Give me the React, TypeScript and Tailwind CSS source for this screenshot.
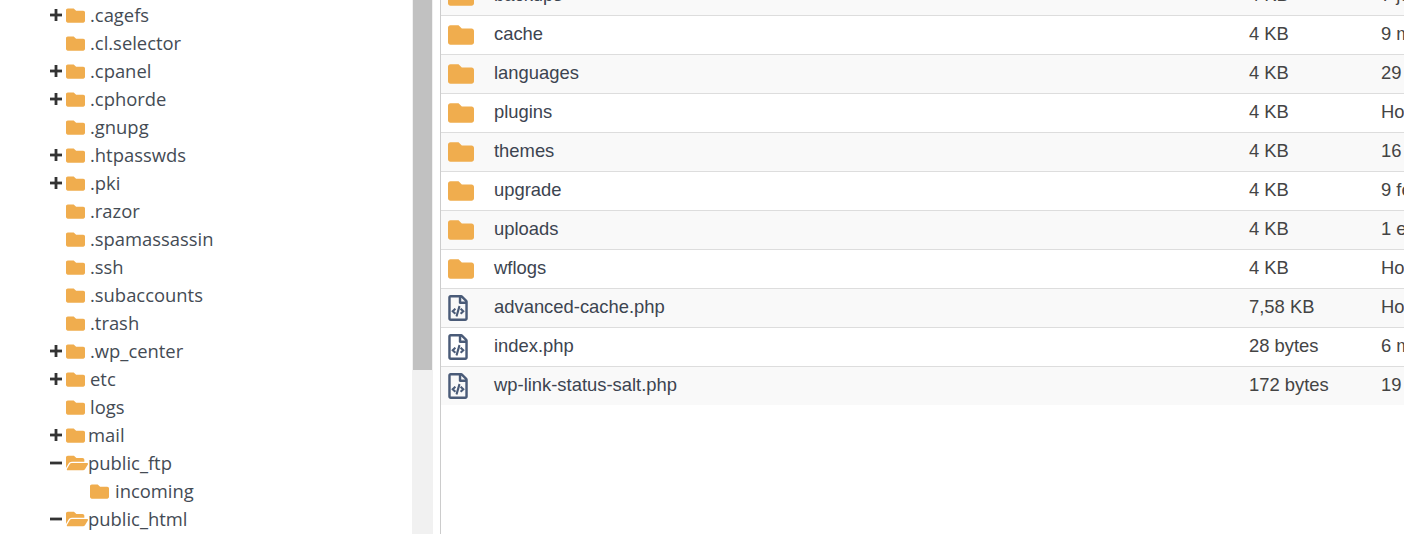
import { FaFolder, FaFolderOpen, FaRegFileCode } from "react-icons/fa";

type TreeRow = { name: string; toggle?: "plus" | "minus"; depth?: number; open?: boolean; tight?: boolean };

const tree: TreeRow[] = [
  { name: ".cagefs", toggle: "plus" },
  { name: ".cl.selector" },
  { name: ".cpanel", toggle: "plus" },
  { name: ".cphorde", toggle: "plus" },
  { name: ".gnupg" },
  { name: ".htpasswds", toggle: "plus" },
  { name: ".pki", toggle: "plus" },
  { name: ".razor" },
  { name: ".spamassassin" },
  { name: ".ssh" },
  { name: ".subaccounts" },
  { name: ".trash" },
  { name: ".wp_center", toggle: "plus" },
  { name: "etc", toggle: "plus" },
  { name: "logs" },
  { name: "mail", toggle: "plus", tight: true },
  { name: "public_ftp", toggle: "minus", open: true, tight: true },
  { name: "incoming", depth: 1 },
  { name: "public_html", toggle: "minus", open: true, tight: true },
];

type FileRow = { name: string; size: string; date: string; file?: boolean };

const files: FileRow[] = [
  { name: "backups", size: "4 KB", date: "7 jul" },
  { name: "cache", size: "4 KB", date: "9 may" },
  { name: "languages", size: "4 KB", date: "29 ene" },
  { name: "plugins", size: "4 KB", date: "Hoy" },
  { name: "themes", size: "4 KB", date: "16 ene" },
  { name: "upgrade", size: "4 KB", date: "9 feb" },
  { name: "uploads", size: "4 KB", date: "1 ene" },
  { name: "wflogs", size: "4 KB", date: "Hoy" },
  { name: "advanced-cache.php", size: "7,58 KB", date: "Hoy", file: true },
  { name: "index.php", size: "28 bytes", date: "6 may", file: true },
  { name: "wp-link-status-salt.php", size: "172 bytes", date: "19 ene", file: true },
];

function Toggle({ kind }: { kind?: "plus" | "minus" }) {
  return (
    <span className="flex w-[16px] shrink-0 items-center text-[#333]">
      {kind && (
        <svg width="12" height="12" viewBox="0 0 12 12" fill="none" stroke="currentColor" strokeWidth="2.8">
          <path d="M0 6H12" />
          {kind === "plus" && <path d="M6 0V12" />}
        </svg>
      )}
    </span>
  );
}

function Tree() {
  return (
    <div className="w-[412px] shrink-0 pt-px font-['Open_Sans',sans-serif] text-[18.4px] text-[#444b54]">
      {tree.map((r) => (
        <div key={r.name} className="flex h-[28px] items-center pl-[50px]">
          <Toggle kind={r.toggle} />
          {r.depth ? <span className="w-[24px] shrink-0" /> : null}
          {r.open ? (
            <FaFolderOpen className="h-[22px] w-[22px] shrink-0 text-[#f0ad4e]" />
          ) : (
            <FaFolder className="h-[19px] w-[19px] shrink-0 text-[#f0ad4e]" />
          )}
          <span className={r.open ? "" : r.tight ? "ml-[3px]" : r.depth ? "ml-[6px]" : "ml-[5px]"}>{r.name}</span>
        </div>
      ))}
    </div>
  );
}

function Scrollbar() {
  return (
    <div className="flex h-full w-[21px] shrink-0 justify-center bg-[#f1f1f1]">
      <div className="h-[370px] w-[19px] bg-[#c1c1c1]" />
    </div>
  );
}

function Table() {
  return (
    <div className="ml-[7px] min-w-0 flex-1 overflow-hidden border-l border-[#ccc] font-['Liberation_Sans',sans-serif] text-[18.4px] text-[#444]">
      <div className="-mt-[24px]">
        {files.map((f, i) => (
          <div
            key={f.name}
            className={`flex h-[39px] items-center border-t border-[#ddd] pb-[2px] ${i % 2 === 0 ? "bg-[#f9f9f9]" : "bg-white"}`}
          >
            <span className="mt-[2px] flex w-[53px] shrink-0 pl-[7px]">
              {f.file ? (
                <FaRegFileCode className="h-[26px] w-[20px] text-[#4a5b78]" />
              ) : (
                <FaFolder className="h-[26px] w-[26px] text-[#f0ad4e]" />
              )}
            </span>
            <span className="w-[755px] shrink-0 text-[#3c4450]">{f.name}</span>
            <span className="w-[132px] shrink-0">{f.size}</span>
            <span className="whitespace-nowrap">{f.date}</span>
          </div>
        ))}
      </div>
    </div>
  );
}

export default function App() {
  return (
    <div className="flex h-[534px] w-[1404px] overflow-hidden bg-white">
      <Tree />
      <Scrollbar />
      <Table />
    </div>
  );
}
